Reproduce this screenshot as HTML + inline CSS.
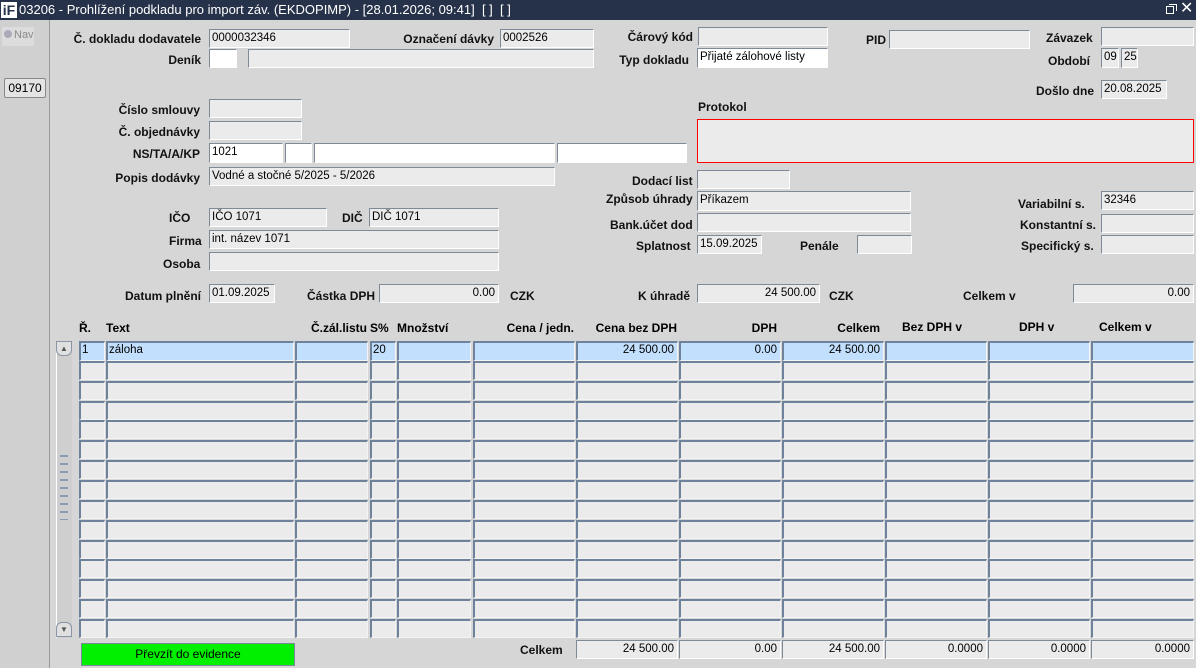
<!DOCTYPE html>
<html><head><meta charset="utf-8">
<style>
*{box-sizing:border-box;margin:0;padding:0}
body{width:1196px;height:668px;overflow:hidden;background:#d6d6d6;font-family:"Liberation Sans",Arial,sans-serif;position:relative}
.a{position:absolute}
#tb{left:0;top:0;width:1196px;height:20px;background:#26324a;color:#fff;font-size:13px;line-height:20px}
#tb .logo{left:1px;top:2px;width:16px;height:16px;background:#fff;color:#26324a;font-weight:bold;font-size:14px;line-height:16px;text-align:center}
#tb .t{left:19px;top:0}
#left{left:0;top:20px;width:50px;height:648px;background:#d0d0d0;border-right:1px solid #9a9a9a}
.l{position:absolute;font-size:12px;font-weight:bold;color:#111;white-space:nowrap}
.r{text-align:right}
.f{position:absolute;background:#ebebeb;border-top:1px solid #7f8a99;border-left:1px solid #7f8a99;border-right:1px solid #fff;border-bottom:1px solid #fff;font-size:11.5px;line-height:16px;padding-left:2px;white-space:nowrap;overflow:hidden;color:#000}
.w{background:#fff}
.rt{text-align:right;padding-right:3px}
.c{position:absolute;background:#ebebeb;border-top:2px solid #6f829c;border-left:2px solid #6f829c;border-right:1px solid #f4f4f4;border-bottom:1px solid #f4f4f4;font-size:11.5px;line-height:15px;padding-left:1px;white-space:nowrap;overflow:hidden}
.b{background:#c2e0fd}
.h{position:absolute;top:321px;font-size:12px;font-weight:bold}
</style></head><body>
<div id="tb" class="a"><div class="a logo">iF</div><div class="a t">03206 - Prohlížení podkladu pro import záv. (EKDOPIMP) - [28.01.2026; 09:41]&nbsp; [ ]&nbsp; [ ]</div>
<div class="a" style="left:1169px;top:4px;width:8px;height:7px;border:1px solid #fff;border-bottom:none;border-left:none"></div>
<div class="a" style="left:1166px;top:6px;width:8px;height:8px;border:1px solid #fff"></div>
<div class="a" style="left:1180px;top:-1px;font-size:16px">✕</div></div>
<div id="left" class="a">
<div class="a" style="left:2px;top:7px;width:32px;height:19px;background:#dcdcdc;font-size:11px;color:#8a8a8a;line-height:16px"><span style="display:inline-block;width:8px;height:8px;border-radius:50%;background:#aab;margin:0 2px 0 2px"></span>Nav</div>
<div class="a" style="left:4px;top:58px;width:42px;height:20px;background:#e4e4e4;border:1px solid #888;border-radius:2px;font-size:12px;text-align:center;line-height:18px">09170</div>
</div>

<div class="l r" style="left:60px;top:32px;width:141px">Č. dokladu dodavatele</div>
<div class="f" style="left:209px;top:29px;width:141px;height:19px">0000032346</div>
<div class="l r" style="left:380px;top:32px;width:114px">Označení dávky</div>
<div class="f" style="left:500px;top:29px;width:94px;height:19px">0002526</div>
<div class="l r" style="left:100px;top:53px;width:101px">Deník</div>
<div class="f w" style="left:209px;top:49px;width:28px;height:19px"></div>
<div class="f" style="left:248px;top:49px;width:346px;height:19px"></div>
<div class="l r" style="left:600px;top:30px;width:93px">Čárový kód</div>
<div class="f" style="left:698px;top:27px;width:130px;height:19px"></div>
<div class="l r" style="left:600px;top:53px;width:89px">Typ dokladu</div>
<div class="f w" style="left:697px;top:48px;width:131px;height:20px">Přijaté zálohové listy</div>
<div class="l" style="left:866px;top:33px">PID</div>
<div class="f" style="left:889px;top:30px;width:141px;height:19px"></div>
<div class="l" style="left:1046px;top:31px">Závazek</div>
<div class="f" style="left:1101px;top:27px;width:93px;height:19px"></div>
<div class="l" style="left:1048px;top:54px">Období</div>
<div class="f" style="left:1101px;top:48px;width:18px;height:20px">09</div>
<div class="f" style="left:1121px;top:48px;width:17px;height:20px">25</div>
<div class="l" style="left:1036px;top:84px">Došlo dne</div>
<div class="f" style="left:1101px;top:80px;width:66px;height:19px">20.08.2025</div>

<div class="l r" style="left:100px;top:103px;width:100px">Číslo smlouvy</div>
<div class="f" style="left:209px;top:99px;width:93px;height:19px"></div>
<div class="l r" style="left:100px;top:125px;width:100px">Č. objednávky</div>
<div class="f" style="left:209px;top:121px;width:93px;height:19px"></div>
<div class="l" style="left:698px;top:100px">Protokol</div>
<div class="a" style="left:697px;top:119px;width:497px;height:44px;background:#ebebeb;border:1px solid #f00"></div>
<div class="l r" style="left:100px;top:147px;width:100px">NS/TA/A/KP</div>
<div class="f w" style="left:209px;top:143px;width:74px;height:20px">1021</div>
<div class="f w" style="left:285px;top:143px;width:27px;height:20px"></div>
<div class="f w" style="left:314px;top:143px;width:241px;height:20px"></div>
<div class="f w" style="left:557px;top:143px;width:130px;height:20px"></div>
<div class="l r" style="left:100px;top:171px;width:100px">Popis dodávky</div>
<div class="f" style="left:209px;top:167px;width:346px;height:19px">Vodné a stočné 5/2025 - 5/2026</div>
<div class="l" style="left:632px;top:174px">Dodací list</div>
<div class="f" style="left:697px;top:170px;width:93px;height:19px"></div>
<div class="l" style="left:606px;top:192px">Způsob úhrady</div>
<div class="f" style="left:697px;top:191px;width:214px;height:20px">Příkazem</div>
<div class="l" style="left:1018px;top:197px">Variabilní s.</div>
<div class="f" style="left:1101px;top:191px;width:93px;height:19px">32346</div>
<div class="l" style="left:169px;top:211px">IČO</div>
<div class="f" style="left:209px;top:208px;width:118px;height:19px">IČO 1071</div>
<div class="l" style="left:342px;top:211px">DIČ</div>
<div class="f" style="left:369px;top:208px;width:130px;height:19px">DIČ 1071</div>
<div class="l" style="left:610px;top:218px">Bank.účet dod</div>
<div class="f" style="left:697px;top:213px;width:214px;height:19px"></div>
<div class="l" style="left:1020px;top:218px">Konstantní s.</div>
<div class="f" style="left:1101px;top:214px;width:93px;height:19px"></div>
<div class="l" style="left:169px;top:234px">Firma</div>
<div class="f" style="left:209px;top:230px;width:290px;height:19px">int. název 1071</div>
<div class="l" style="left:636px;top:239px">Splatnost</div>
<div class="f" style="left:697px;top:235px;width:65px;height:19px">15.09.2025</div>
<div class="l" style="left:800px;top:239px">Penále</div>
<div class="f" style="left:857px;top:235px;width:55px;height:19px"></div>
<div class="l" style="left:1021px;top:239px">Specifický s.</div>
<div class="f" style="left:1101px;top:235px;width:93px;height:19px"></div>
<div class="l" style="left:163px;top:257px">Osoba</div>
<div class="f" style="left:209px;top:252px;width:290px;height:19px"></div>

<div class="l" style="left:125px;top:289px">Datum plnění</div>
<div class="f" style="left:209px;top:284px;width:66px;height:19px">01.09.2025</div>
<div class="l" style="left:307px;top:289px">Částka DPH</div>
<div class="f rt" style="left:379px;top:284px;width:120px;height:19px">0.00</div>
<div class="l" style="left:510px;top:289px">CZK</div>
<div class="l" style="left:638px;top:289px">K úhradě</div>
<div class="f rt" style="left:697px;top:284px;width:123px;height:19px">24 500.00</div>
<div class="l" style="left:829px;top:289px">CZK</div>
<div class="l" style="left:963px;top:289px">Celkem v</div>
<div class="f rt" style="left:1073px;top:284px;width:121px;height:19px">0.00</div>

<div class="h" style="left:79px">Ř.</div>
<div class="h" style="left:106px">Text</div>
<div class="h" style="left:311px">Č.zál.listu</div>
<div class="h" style="left:370px">S%</div>
<div class="h" style="left:397px">Množství</div>
<div class="h r" style="left:473px;width:101px">Cena / jedn.</div>
<div class="h r" style="left:576px;width:101px">Cena bez DPH</div>
<div class="h r" style="left:679px;width:98px">DPH</div>
<div class="h r" style="left:782px;width:98px">Celkem</div>
<div class="h" style="left:902px;top:320px">Bez DPH v</div>
<div class="h" style="left:1019px;top:320px">DPH v</div>
<div class="h" style="left:1099px;top:320px">Celkem v</div>

<div class="a" style="left:56px;top:341px;width:16px;height:297px;background:#cfcfcf;border-left:1px solid #fff"></div>
<div class="a" style="left:56px;top:341px;width:16px;height:15px;background:#e0e0e0;border:1px solid #8a95a5;border-radius:0 0 6px 6px;font-size:8px;color:#555;text-align:center;line-height:13px">▲</div>
<div class="a" style="left:56px;top:622px;width:16px;height:15px;background:#e0e0e0;border:1px solid #8a95a5;border-radius:6px 6px 0 0;font-size:8px;color:#555;text-align:center;line-height:13px">▼</div>
<div class="a" style="left:60px;top:450px;width:8px;height:70px;background:repeating-linear-gradient(#cfcfcf 0 5px,#8a9ab0 5px 7px,#cfcfcf 7px 8px)"></div>

<div id="grid"></div>
<div class="c b" style="left:79px;top:341px;width:26px;height:20px">1</div>
<div class="c b" style="left:106px;top:341px;width:188px;height:20px">záloha</div>
<div class="c b" style="left:295px;top:341px;width:73px;height:20px"></div>
<div class="c b" style="left:370px;top:341px;width:26px;height:20px">20</div>
<div class="c b" style="left:397px;top:341px;width:74px;height:20px"></div>
<div class="c b" style="left:473px;top:341px;width:102px;height:20px"></div>
<div class="c b rt" style="left:576px;top:341px;width:102px;height:20px">24 500.00</div>
<div class="c b rt" style="left:679px;top:341px;width:102px;height:20px">0.00</div>
<div class="c b rt" style="left:782px;top:341px;width:102px;height:20px">24 500.00</div>
<div class="c b" style="left:885px;top:341px;width:102px;height:20px"></div>
<div class="c b" style="left:988px;top:341px;width:102px;height:20px"></div>
<div class="c b" style="left:1091px;top:341px;width:103px;height:20px"></div>

<div class="l" style="left:520px;top:643px">Celkem</div>
<div class="f rt" style="left:576px;top:640px;width:102px;height:19px">24 500.00</div>
<div class="f rt" style="left:679px;top:640px;width:102px;height:19px">0.00</div>
<div class="f rt" style="left:782px;top:640px;width:102px;height:19px">24 500.00</div>
<div class="f rt" style="left:885px;top:640px;width:102px;height:19px">0.0000</div>
<div class="f rt" style="left:988px;top:640px;width:102px;height:19px">0.0000</div>
<div class="f rt" style="left:1091px;top:640px;width:103px;height:19px">0.0000</div>

<div class="a" style="left:81px;top:643px;width:214px;height:23px;background:#00f000;border:1px solid #7a8a9a;font-size:12px;text-align:center;line-height:21px">Převzít do evidence</div>

<script>
var cols=[[79,26],[106,188],[295,73],[370,26],[397,74],[473,102],[576,102],[679,102],[782,102],[885,102],[988,102],[1091,103]];
var h='';
for(var r=1;r<15;r++){var y=Math.round(341+r*19.86);for(var i=0;i<cols.length;i++){h+='<div class="c" style="left:'+cols[i][0]+'px;top:'+y+'px;width:'+cols[i][1]+'px;height:19px"></div>';}}
document.getElementById('grid').innerHTML=h;
</script>
</body></html>
